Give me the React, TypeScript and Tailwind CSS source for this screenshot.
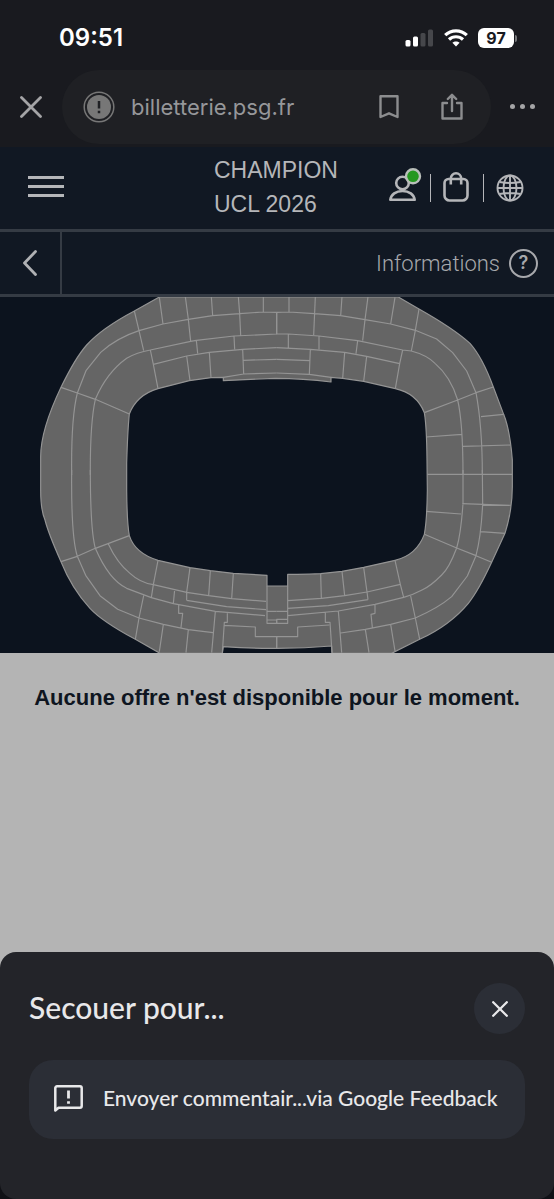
import React from "react";

function StatusBar() {
  return (
    <div className="flex h-[70px] items-center justify-between pt-[6px] pr-[37px] pl-[59px]">
      <time className="font-['Inter',sans-serif] text-2xl font-semibold text-white">09:51</time>
      <div className="flex items-center gap-[10px]">
        <svg width="29" height="18" viewBox="0 0 29 18" aria-label="Signal">
          <rect x="0.5" y="11" width="5" height="6.5" rx="1.5" fill="#fff" />
          <rect x="8" y="7.5" width="5" height="10" rx="1.5" fill="#fff" />
          <rect x="15.5" y="4" width="5" height="13.5" rx="1.5" fill="#46474b" />
          <rect x="23" y="0.5" width="5" height="17" rx="1.5" fill="#46474b" />
        </svg>
        <svg width="24" height="18" viewBox="0 0 24 18" aria-label="Wi-Fi" fill="none" stroke="#fff" strokeWidth="3.2">
          <path d="M1.200 6.200C7.200 0.400 16.800 0.400 22.800 6.200" />
          <path d="M5 10.500C8.900 6.800 15.100 6.800 19 10.500" />
          <path d="M12 17.500l-3.600-3.700c2-1.800 5.200-1.800 7.200 0z" fill="#fff" stroke="none" />
        </svg>
        <div className="flex items-center gap-px">
          <span className="flex h-5 w-9 items-center justify-center rounded-md bg-white font-['Inter',sans-serif] text-base font-bold text-[#191a1f]">
            97
          </span>
          <span className="h-[7px] w-[2px] rounded-r-full bg-[#77787b]" />
        </div>
      </div>
    </div>
  );
}

function BrowserBar() {
  return (
    <div className="flex h-[77px] items-start pr-[19px] pl-5">
      <button aria-label="Fermer" className="mt-[26px] w-[22px] text-[#a4a4a6]">
        <svg width="22" height="22" viewBox="0 0 22 22" fill="none" stroke="currentColor" strokeWidth="2.800" strokeLinecap="round">
          <path d="M1.500 1.500l19 19M20.500 1.500l-19 19" />
        </svg>
      </button>
      <div className="ml-5 flex h-[74px] flex-1 items-center rounded-full bg-[#1f2024] pr-7 pl-[21px] text-[#8c8d8f]">
        <svg width="32" height="32" viewBox="0 0 32 32" aria-hidden="true">
          <circle cx="16" cy="16" r="14.800" fill="none" stroke="#777" strokeWidth="1.500" />
          <circle cx="16" cy="16" r="12" fill="#777" />
          <path d="M16 10v7.500M16 19.800v2.400" stroke="#1f2024" strokeWidth="2.500" />
        </svg>
        <span className="ml-4 flex-1 font-['Inter',sans-serif] text-[22px] text-[#96979a]">billetterie.psg.fr</span>
        <button aria-label="Favoris">
          <svg width="20" height="24" viewBox="0 0 20 24" fill="none" stroke="currentColor" strokeWidth="2.400" strokeLinejoin="round">
            <path d="M1.500 1.300h17v20.700L10 18.300 1.500 22z" />
          </svg>
        </button>
        <button aria-label="Partager" className="ml-[42px]">
          <svg width="22" height="28" viewBox="0 0 22 28" fill="none" stroke="currentColor" strokeWidth="2.400" strokeLinejoin="round" strokeLinecap="round">
            <path d="M6 10H1.500v15.500h19V10H16M11 18V2M6.800 6L11 1.800 15.200 6" />
          </svg>
        </button>
      </div>
      <button aria-label="Plus" className="mt-[34px] ml-[19px] flex gap-[5px]">
        <span className="size-[5px] rounded-full bg-[#a4a4a6]" />
        <span className="size-[5px] rounded-full bg-[#a4a4a6]" />
        <span className="size-[5px] rounded-full bg-[#a4a4a6]" />
      </button>
    </div>
  );
}

function SiteHeader() {
  return (
    <header className="flex h-[85px] items-center border-b-[3px] border-[#353b44] bg-[#111823] pr-[30px] pl-7 text-[#b5b6b9]">
      <button aria-label="Menu" className="mt-[-3px] flex w-9 flex-col gap-[6px]">
        <span className="h-[3px] bg-current" />
        <span className="h-[3px] bg-current" />
        <span className="h-[3px] bg-current" />
      </button>
      <h1 className="mt-[-3px] ml-[150px] flex-1 font-['Liberation_Sans',sans-serif] text-[23px] leading-[34px]">
        CHAMPION
        <br />
        UCL 2026
      </h1>
      <div className="flex items-center">
        <button aria-label="Compte">
          <svg width="34" height="34" viewBox="0 0 34 34" fill="none" stroke="currentColor" strokeWidth="2.600" className="overflow-visible">
            <circle cx="14.500" cy="12" r="6.300" />
            <path d="M2.300 28.800C3 23.500 8 20 14.500 20s11.500 3.500 12.200 8.800z" strokeLinejoin="round" />
            <circle cx="25" cy="5.300" r="7" fill="#259820" stroke="#b9bfba" strokeWidth="2.400" />
          </svg>
        </button>
        <span className="ml-2 h-[28px] w-px bg-current" />
        <button aria-label="Panier" className="ml-3">
          <svg width="26" height="32" viewBox="0 0 26 32" fill="none" stroke="currentColor" strokeWidth="2.600">
            <path d="M5.500 7h15a4 4 0 0 1 4 4v12.500a5 5 0 0 1-5 5h-13a5 5 0 0 1-5-5V11a4 4 0 0 1 4-4z" />
            <path d="M7.800 12.500V6.500a5.200 5.200 0 0 1 10.400 0v6" />
          </svg>
        </button>
        <span className="ml-[14px] h-[28px] w-px bg-current" />
        <button aria-label="Langue" className="ml-3">
          <svg width="28" height="28" viewBox="0 0 28 28" fill="none" stroke="currentColor" strokeWidth="1.900">
            <circle cx="14" cy="14" r="12.500" />
            <ellipse cx="14" cy="14" rx="6.500" ry="12.500" />
            <path d="M14 1.500v25M1.500 14h25M3.500 8q10.500 2 21 0M3.500 20q10.500-2 21 0" />
          </svg>
        </button>
      </div>
    </header>
  );
}

function InfoBar() {
  return (
    <nav className="flex h-[65px] items-stretch border-b-[3px] border-[#353b44] bg-[#111823] text-[#b0b1b4]">
      <button aria-label="Retour" className="flex w-[62px] items-center border-r-2 border-[#353b44] pl-[22px]">
        <svg width="16" height="26" viewBox="0 0 16 26" fill="none" stroke="currentColor" strokeWidth="2.800" strokeLinecap="round" strokeLinejoin="round">
          <path d="M13.500 1.500L2.500 13l11 11.500" />
        </svg>
      </button>
      <button className="ml-auto flex items-center gap-[9px] pr-4 font-['Roboto',sans-serif] text-[22px] font-light text-[#a7a8ac]">
        Informations
        <span className="flex size-[29px] items-center justify-center rounded-full border-2 border-current font-['Inter',sans-serif] text-lg font-semibold">
          ?
        </span>
      </button>
    </nav>
  );
}

const STANDS =
  "M478 891L403 933Q305 985 260 1035Q225 1075 183 1162Q122 1290 122 1370V1470Q122 1530 135 1560Q145 1600 183 1685Q215 1765 270 1825Q306 1864 406 1918L480 1960H667L670 1940Q760 1946 830 1945Q915 1945 995 1938L996 1960H1175L1259 1918Q1350 1876 1405 1810Q1435 1773 1475 1687L1515 1600Q1537 1530 1537 1460V1380Q1530 1290 1511 1243L1480 1161Q1448 1073 1410 1030Q1360 985 1257 927L1195 891Z" +
  "M474 1166Q410 1185 388 1242Q383 1290 380 1390V1470Q381 1570 388 1607Q405 1660 474 1681L570 1703L631 1712L700 1720L801 1726V1758H863V1723Q920 1724 962 1721L1026 1714L1091 1702L1185 1681Q1250 1665 1273 1603Q1281 1560 1282 1470L1281 1380Q1280 1280 1273 1238Q1250 1180 1186 1166L1091 1144L1028 1135L993 1132V1146Q910 1135 825 1135L670 1142V1132L633 1133L568 1142Z";

// Each quarter of the bowl is drawn in its own local coordinates.
const NORTH_WEST = [
  "M313 63L327 122L341 182M388 22L399 102M466 20L475 88L482 154M544 20L548 77M625 20L629 71L632 136M700 20V66",
  "M142 309L168 242L212 187Q260 144 327 122L399 102L475 88L548 77L629 71L700 66L740 67",
  "M196 328Q230 248 290 205Q320 187 361 180L482 154L499 151L612 138L740 132M740 67V132",
  "M361 180L370 223L384 296M499 151L503 190M612 138L614 178M370 223L470 198L538 187L638 178L740 173",
  "M470 198L480 272M538 187L543 263M638 178L641 252M640 211L740 208M580 262L641 252L740 249",
  "M93 292L142 309L196 328L298 372M142 309Q123 385 125 555M196 328Q180 400 181 555",
];
const NORTH_EAST = [
  "M42 20V66M121 20L116 135M201 20L197 77M279 20L270 89L263 152M360 22L347 102M432 57L421 121L409 183",
  "M5 67L42 66L118 71L197 77L270 89L347 102L421 121L485 147L533 188L575 243L603 308Q622 410 622 555",
  "M5 67V132L40 132L132 138L248 152L383 180L409 183Q455 195 480 220Q527 260 548 330Q564 400 564 555",
  "M40 132V173M132 138V178M248 152L243 191M383 180L374 221L361 296",
  "M5 173L106 178L209 187L275 199L374 221M106 178L103 253L168 262M5 208L105 212M5 249L103 253M209 187L203 265M275 199L266 274",
  "M655 291L603 308L548 330L448 368M686 373L618 380M707 465L564 469M453 441L561 433M457 553H712",
];
const SOUTH_WEST = [
  "M125 0Q123 200 142 259L167 316L210 377L263 418L327 444L400 463L475 479L549 488M181 0Q181 180 196 235Q237 330 290 355L364 383L430 401L556 424L705 437",
  "M93 275L142 259L196 235L298 197M235 222Q262 280 300 310Q330 338 370 344L470 367L536 377L605 386L708 394",
  "M384 271L370 344L364 383M480 293L470 367V391M541 302L536 377M610 310L605 386M434 359L430 401M470 391L590 410L708 419",
  "M341 377L327 444L316 508M446 405V430H458L453 472M400 463L388 545M475 479L468 548M556 424L545 548",
  "M592 430V457H583L577 548M583 466L676 471V500H740V535M711 348V460H740V450H711M711 424H740",
];
const SOUTH_EAST = [
  "M622 0L623 103Q618 200 603 257L577 318L530 380Q490 414 421 444L347 463L271 478L197 489",
  "M564 0L564 100Q558 190 545 234Q522 295 500 315Q465 350 441 360Q415 374 386 382L300 403L190 423L38 437",
  "M650 277L603 257L545 234L448 193M690 190L617 185M707 106L562 101M558 132L453 124",
  "M360 271L376 343L386 382M376 343L276 366L209 377L139 385L38 392M266 292L276 366L279 389M201 304L209 377M137 311L139 385M38 415L160 407L279 389",
  "M407 378L421 444L434 508M300 403V430L288 433L292 472M347 463L360 543M271 478L282 548M190 423L200 548",
  "M38 348V460H5V448H38M5 424H38M151 428V457H165L171 548M163 465L68 471V500H5V535",
];

function StadiumMap() {
  return (
    <div className="bg-[#0c131e]">
      <svg viewBox="0 891 1662 1068" className="block w-full" role="img" aria-label="Plan du stade" fill="none" stroke="#949494" strokeWidth="3.500" strokeLinejoin="round">
        <path d={STANDS} fill="#656565" fillRule="evenodd" />
        <path d={NORTH_WEST.join("")} transform="translate(90 870)" />
        <path d={NORTH_EAST.join("")} transform="translate(825 870)" />
        <path d={SOUTH_WEST.join("")} transform="translate(90 1410)" />
        <path d={SOUTH_EAST.join("")} transform="translate(825 1410)" />
      </svg>
    </div>
  );
}

function FeedbackSheet() {
  return (
    <div className="fixed inset-x-0 bottom-0 bg-[linear-gradient(#b4b4b4_50%,#101116_50%)]">
      <section role="dialog" aria-labelledby="sheet-title" className="rounded-2xl bg-[#232429] px-[29px] pt-[31px] pb-[60px] font-['Lato',sans-serif] text-[#e8e8ea]">
        <div className="flex items-center justify-between">
          <h2 id="sheet-title" className="pb-1 text-3xl leading-8 font-medium">
            Secouer pour...
          </h2>
          <button aria-label="Fermer" className="flex size-[51px] items-center justify-center rounded-full bg-[#2b2e36]">
            <svg width="16" height="16" viewBox="0 0 16 16" fill="none" stroke="currentColor" strokeWidth="2.300" strokeLinecap="round">
              <path d="M1.200 1.200l13.600 13.600M14.800 1.200L1.200 14.800" />
            </svg>
          </button>
        </div>
        <button className="mt-[26px] flex h-[79px] w-full items-center rounded-3xl bg-[#2b2e36] pl-[25px] text-left">
          <svg width="29" height="29" viewBox="0 0 29 29" fill="none" stroke="currentColor" strokeWidth="2.500" aria-hidden="true">
            <path d="M1.300 25.500V3a1.700 1.700 0 0 1 1.700-1.700h23a1.700 1.700 0 0 1 1.700 1.700v18a1.700 1.700 0 0 1-1.700 1.700H4.500z" strokeLinejoin="round" />
            <path d="M14.500 5.500v8M14.500 16.200v2.600" strokeWidth="2.800" />
          </svg>
          <span className="ml-5 pb-1 text-[21px] font-medium whitespace-nowrap">Envoyer commentair...via Google Feedback</span>
        </button>
      </section>
    </div>
  );
}

export default function App() {
  return (
    <div className="min-h-screen bg-[#b4b4b4]">
      <div className="bg-[#191a1f]">
        <StatusBar />
        <BrowserBar />
      </div>
      <SiteHeader />
      <InfoBar />
      <main>
        <StadiumMap />
        <p className="px-4 pt-[29px] text-center font-['Liberation_Sans',sans-serif] text-[22px] leading-8 font-bold text-[#0e1520]">
          Aucune offre n'est disponible pour le moment.
        </p>
      </main>
      <FeedbackSheet />
    </div>
  );
}
